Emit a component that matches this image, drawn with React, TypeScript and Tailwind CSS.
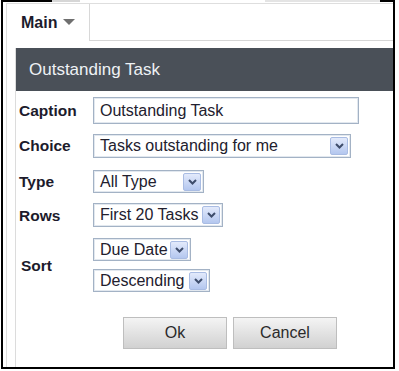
import clsx from 'clsx'

const FONT = "font-['Liberation_Sans',Arial,sans-serif]"

function Chevron() {
  return (
    <svg width="9" height="6" viewBox="0 0 9 6" fill="none">
      <polyline points="1,1 4.5,4.5 8,1" stroke="#3e4d6b" strokeWidth="2" />
    </svg>
  )
}

// old-style IE select box with the blue dropdown button
function Select({ value, className }: { value: string; className: string }) {
  return (
    <div
      className={clsx(
        'flex items-center border border-[#a3b2c5] bg-white pl-[6px] pr-[2px] shadow-[inset_0_0_0_1px_#e2e8ef]',
        className
      )}
    >
      <span className="flex-1 whitespace-nowrap text-[16px] leading-none text-[#22202e]">{value}</span>
      <span className="flex h-[18px] w-[18px] items-center justify-center rounded-[2px] border border-[#a9bce3] bg-linear-to-b from-[#e3eafb] to-[#b4c7ef]">
        <Chevron />
      </span>
    </div>
  )
}

function Label({ children, className }: { children: string; className?: string }) {
  return (
    <div className={clsx('flex items-center pl-[3px] text-[15.5px] font-bold text-[#1c1b2c]', className)}>
      {children}
    </div>
  )
}

function Button({ children }: { children: string }) {
  return (
    <button className="h-[32px] w-[104px] border border-[#bebebe] bg-linear-to-b from-[#f4f4f4] to-[#d1d1d1] text-[16px] text-[#2a2a2a]">
      {children}
    </button>
  )
}

export default function App() {
  return (
    <div className={clsx('h-[371px] w-[399px] bg-white', FONT)}>
      <div className="ml-px flex h-[369px] w-[394px] flex-col border-x-2 border-b-2 border-black">
        {/* cropped frame top edge */}
        <div className="-mx-[2px] flex h-[2px]">
          <div className="w-[51px] bg-black" />
          <div className="w-[28px] bg-[#d6d6d6]" />
          <div className="flex-1" />
          <div className="w-[115px] bg-[#e4e4e4]" />
          <div className="w-[15px] bg-black" />
        </div>

        <div className="ml-[3px] mt-px flex flex-1 flex-col border-l border-t border-[#dedede]">
          {/* tab strip */}
          <div className="flex h-[37px]">
            <div className="flex w-[83px] items-center gap-[6px] border-r border-[#d8d8d8] pl-[14px]">
              <span className="text-[16px] font-bold text-[#1c1b2c]">Main</span>
              <svg width="12" height="7" viewBox="0 0 12 7">
                <polygon points="0,0 12,0 6,6" fill="#6f6f6f" />
              </svg>
            </div>
            <div className="flex-1 border-b border-[#d6d6d6]" />
          </div>

          <div className="ml-[8px] mt-[7px] flex flex-1 flex-col border-l border-[#dcdcdc]">
            <div className="flex h-[43px] items-center bg-[#4a5058] pl-[13px] text-[17px] text-[#eef2f5]">
              Outstanding Task
            </div>

            <div className="grid grid-cols-[77px_1fr] pt-[6px]">
              <Label>Caption</Label>
              <div className="flex h-[27px] w-[266px] items-center border border-[#a3b2c5] pl-[6px] text-[16px] text-[#22202e] shadow-[inset_0_0_0_1px_#e2e8ef]">
                Outstanding Task
              </div>

              <Label className="mt-[10px]">Choice</Label>
              <Select value="Tasks outstanding for me" className="mt-[10px] h-[24px] w-[258px]" />

              <Label className="mt-[12px]">Type</Label>
              <Select value="All Type" className="mt-[12px] h-[23px] w-[111px]" />

              <Label className="mt-[10px]">Rows</Label>
              <Select value="First 20 Tasks" className="mt-[10px] h-[24px] w-[130px]" />

              <Label className="mt-[11px] pl-[5px]">Sort</Label>
              <div className="mt-[11px] flex flex-col gap-[8px]">
                <Select value="Due Date" className="h-[23px] w-[98px]" />
                <Select value="Descending" className="h-[23px] w-[117px]" />
              </div>
            </div>

            <div className="mt-[25px] flex gap-[6px] pl-[107px]">
              <Button>Ok</Button>
              <Button>Cancel</Button>
            </div>
          </div>
        </div>
      </div>
    </div>
  )
}
